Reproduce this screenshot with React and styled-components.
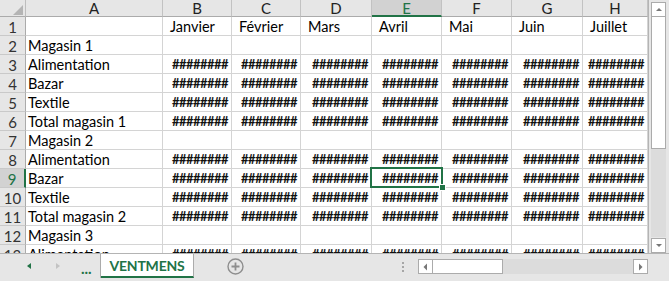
import React from 'react';
import styled, { createGlobalStyle, css } from 'styled-components';

const GREEN = '#217346';
const GRID = '#d4d4d4';
const HEAD = '#e6e6e6';

const COLS = [
  { key: 'A', w: 137 },
  { key: 'B', w: 69 },
  { key: 'C', w: 69 },
  { key: 'D', w: 71 },
  { key: 'E', w: 70 },
  { key: 'F', w: 70 },
  { key: 'G', w: 71 },
  { key: 'H', w: 65 },
];

const MONTHS = ['Janvier', 'Février', 'Mars', 'Avril', 'Mai', 'Juin', 'Juillet'];
const HASH = '########';

const ROWS = [
  { label: '', months: true },
  { label: 'Magasin 1' },
  { label: 'Alimentation', hash: true },
  { label: 'Bazar', hash: true },
  { label: 'Textile', hash: true },
  { label: 'Total magasin 1', hash: true },
  { label: 'Magasin 2' },
  { label: 'Alimentation', hash: true },
  { label: 'Bazar', hash: true },
  { label: 'Textile', hash: true },
  { label: 'Total magasin 2', hash: true },
  { label: 'Magasin 3' },
  { label: 'Alimentation', hash: true },
];

const SELECTED = { row: 9, col: 'E' };

const GlobalStyle = createGlobalStyle`
  html, body {
    margin: 0;
    padding: 0;
    overflow: hidden;
    background: ${HEAD};
  }
  body {
    font-family: Lato, "Liberation Sans", sans-serif;
  }
`;

const Window = styled.div`
  width: 669px;
  height: 281px;
  display: flex;
  flex-direction: column;
  background: ${HEAD};
  overflow: hidden;
`;

const Main = styled.div`
  display: flex;
  height: 253px;
`;

const Sheet = styled.div`
  width: 648px;
  height: 253px;
  overflow: hidden;
  background: #fff;
  border-right: 1px solid #b4b4b4;
`;

const Grid = styled.div`
  display: grid;
  grid-template-columns: 26px ${COLS.map((c) => `${c.w}px`).join(' ')};
  grid-template-rows: 17px repeat(${ROWS.length}, 19px);
`;

const Corner = styled.div`
  background: ${HEAD};
  border-right: 1px solid #bdbdbd;
  border-bottom: 1px solid #ababab;
  display: flex;
  align-items: flex-end;
  justify-content: flex-end;
  padding: 0 2px 1px 0;
`;

const ColHead = styled.div`
  box-sizing: border-box;
  background: ${(p) => (p.$active ? '#d2d2d2' : HEAD)};
  color: ${(p) => (p.$active ? GREEN : '#222')};
  border-right: 1px solid #c2c2c2;
  border-bottom: ${(p) => (p.$active ? `2px solid ${GREEN}` : '1px solid #ababab')};
  font-size: 15px;
  line-height: 16px;
  text-align: center;
`;

const RowHead = styled.div`
  box-sizing: border-box;
  background: ${(p) => (p.$active ? '#d2d2d2' : HEAD)};
  color: ${(p) => (p.$active ? GREEN : '#333')};
  border-right: ${(p) => (p.$active ? `2px solid ${GREEN}` : '1px solid #ababab')};
  border-bottom: 1px solid #c9c9c9;
  font-size: 15px;
  line-height: 18px;
  padding-top: 1px;
  text-align: center;
`;

const Cell = styled.div`
  position: relative;
  box-sizing: border-box;
  border-right: 1px solid ${GRID};
  border-bottom: 1px solid ${GRID};
  color: #000;
  font-size: 14.5px;
  line-height: 17px;
  padding-top: 1px;
  white-space: nowrap;
  padding-left: ${(p) => (p.$month ? '7px' : '2px')};
  ${(p) =>
    p.$hash &&
    css`
      text-align: right;
      padding-left: 0;
      padding-right: 3px;
      font-size: 13px;
      letter-spacing: -0.55px;
      font-weight: 700;
      color: #111;
    `}
  ${(p) =>
    p.$selected &&
    css`
      &::after {
        content: '';
        position: absolute;
        left: -2px;
        top: -2px;
        right: -2px;
        bottom: -1px;
        border: 2px solid ${GREEN};
        pointer-events: none;
      }
      &::before {
        content: '';
        position: absolute;
        right: -5px;
        bottom: -4px;
        width: 5px;
        height: 5px;
        background: ${GREEN};
        border: 1px solid #fff;
        z-index: 2;
      }
    `}
`;

const VScroll = styled.div`
  display: flex;
  flex-direction: column;
  width: 15px;
  padding: 2px 0 0 2px;
`;

const ScrollBtn = styled.div`
  box-sizing: border-box;
  width: 15px;
  height: 15px;
  background: #fff;
  border: 1px solid #ababab;
  display: flex;
  align-items: center;
  justify-content: center;
  flex: none;
`;

const VThumb = styled.div`
  box-sizing: border-box;
  height: 132px;
  background: #fff;
  border: 1px solid #ababab;
  border-top: none;
  flex: none;
`;

const VTrack = styled.div`
  flex: 1;
  background: #dcdcdc;
  margin-bottom: 1px;
`;

const Bottom = styled.div`
  display: flex;
  align-items: stretch;
  height: 28px;
  box-sizing: border-box;
  border-top: 1px solid #b4b4b4;
`;

const Nav = styled.div`
  box-sizing: border-box;
  width: 101px;
  border-right: 1px solid #ababab;
  margin-bottom: 3px;
  display: flex;
  align-items: center;
  padding-left: 27px;
`;

const Arrow = styled.div`
  width: 0;
  height: 0;
  border-top: 3.5px solid transparent;
  border-bottom: 3.5px solid transparent;
  ${(p) =>
    p.$dir === 'left'
      ? css`border-right: 4px solid ${p.$color};`
      : css`border-left: 4px solid ${p.$color};`}
  margin-right: ${(p) => p.$gap || 0}px;
`;

const Dots = styled.span`
  color: ${GREEN};
  font-weight: 700;
  font-size: 15px;
  line-height: 1;
  margin-top: 4px;
`;

const Tab = styled.div`
  box-sizing: border-box;
  width: 93px;
  background: #fff;
  border-right: 1px solid #ababab;
  border-bottom: 2px solid ${GREEN};
  margin-bottom: 3px;
  color: ${GREEN};
  font-weight: 700;
  font-size: 14px;
  letter-spacing: -0.2px;
  display: flex;
  align-items: center;
  justify-content: center;
  padding-top: 1px;
`;

const AddSheet = styled.div`
  margin-left: 33px;
  display: flex;
  align-items: center;
  padding-bottom: 2px;
`;

const Splitter = styled.div`
  margin-left: auto;
  margin-right: 14px;
  display: flex;
  flex-direction: column;
  justify-content: center;
  gap: 2px;
  padding-bottom: 2px;
  span {
    display: block;
    width: 2px;
    height: 2px;
    background: #a6a6a6;
  }
`;

const HScroll = styled.div`
  display: flex;
  align-items: center;
  width: 230px;
  margin-right: 21px;
  padding-bottom: 2px;
`;

const HThumb = styled.div`
  box-sizing: border-box;
  width: 70px;
  height: 15px;
  background: #fff;
  border: 1px solid #ababab;
  border-left: none;
`;

const HTrack = styled.div`
  flex: 1;
  height: 15px;
  background: #dcdcdc;
`;

const Tri = ({ dir }) => {
  const pts = {
    up: '1,5 4,2 7,5',
    down: '1,2 4,5 7,2',
    left: '5,0.5 1.5,4 5,7.5',
    right: '2,0.5 5.5,4 2,7.5',
  }[dir];
  return (
    <svg width="8" height="8" viewBox="0 0 8 8">
      <polygon points={pts} fill="#777" />
    </svg>
  );
};

const PlusCircle = () => (
  <svg width="17" height="17" viewBox="0 0 17 17">
    <circle cx="8.5" cy="8.5" r="7.5" fill="none" stroke="#8e8e8e" strokeWidth="1.4" />
    <path d="M8.5 4.5v8M4.5 8.5h8" stroke="#8e8e8e" strokeWidth="1.8" />
  </svg>
);

const CornerMark = () => (
  <svg width="10" height="10" viewBox="0 0 10 10">
    <polygon points="10,0 10,10 0,10" fill="#b4b4b4" />
  </svg>
);

const App = () => {
  return (
    <>
      <GlobalStyle />
      <Window>
        <Main>
          <Sheet>
            <Grid>
              <Corner>
                <CornerMark />
              </Corner>
              {COLS.map((c) => (
                <ColHead key={c.key} $active={c.key === SELECTED.col}>
                  {c.key}
                </ColHead>
              ))}
              {ROWS.map((r, i) => {
                const n = i + 1;
                return (
                  <React.Fragment key={n}>
                    <RowHead $active={n === SELECTED.row}>{n}</RowHead>
                    <Cell>{r.label}</Cell>
                    {COLS.slice(1).map((c, j) => (
                      <Cell
                        key={c.key}
                        $month={r.months}
                        $hash={r.hash}
                        $selected={n === SELECTED.row && c.key === SELECTED.col}
                      >
                        {r.months ? MONTHS[j] : r.hash ? HASH : ''}
                      </Cell>
                    ))}
                  </React.Fragment>
                );
              })}
            </Grid>
          </Sheet>
          <VScroll>
            <ScrollBtn>
              <Tri dir="up" />
            </ScrollBtn>
            <VThumb />
            <VTrack />
            <ScrollBtn>
              <Tri dir="down" />
            </ScrollBtn>
          </VScroll>
        </Main>
        <Bottom>
          <Nav>
            <Arrow $dir="left" $color={GREEN} $gap={25} />
            <Arrow $dir="right" $color="#c3c3c3" $gap={21} />
            <Dots>...</Dots>
          </Nav>
          <Tab>VENTMENS</Tab>
          <AddSheet>
            <PlusCircle />
          </AddSheet>
          <Splitter>
            <span />
            <span />
            <span />
          </Splitter>
          <HScroll>
            <ScrollBtn>
              <Tri dir="left" />
            </ScrollBtn>
            <HThumb />
            <HTrack />
            <ScrollBtn>
              <Tri dir="right" />
            </ScrollBtn>
          </HScroll>
        </Bottom>
      </Window>
    </>
  );
};

export default App;
